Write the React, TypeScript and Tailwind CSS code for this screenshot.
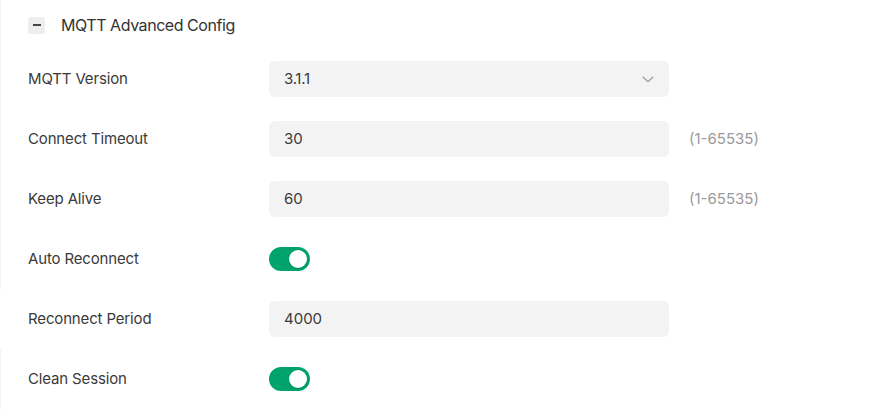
type Row =
  | { label: string; kind: 'select'; value: string }
  | { label: string; kind: 'input'; value: string; hint?: string }
  | { label: string; kind: 'switch'; on: boolean };

const rows: Row[] = [
  { label: 'MQTT Version', kind: 'select', value: '3.1.1' },
  { label: 'Connect Timeout', kind: 'input', value: '30', hint: '(1-65535)' },
  { label: 'Keep Alive', kind: 'input', value: '60', hint: '(1-65535)' },
  { label: 'Auto Reconnect', kind: 'switch', on: true },
  { label: 'Reconnect Period', kind: 'input', value: '4000' },
  { label: 'Clean Session', kind: 'switch', on: true },
];

function Toggle({ on }: { on: boolean }) {
  return (
    <div
      className={`w-[41px] h-6 rounded-full flex items-center px-[3px] ${
        on ? 'bg-[#00a36c] justify-end' : 'bg-[#d9d9d9] justify-start'
      }`}
    >
      <div className="w-[18px] h-[18px] rounded-full bg-white shadow-sm" />
    </div>
  );
}

export default function App() {
  return (
    <div className="w-[874px] h-[412px] bg-white pt-px font-['Inter',sans-serif] text-[#333] overflow-hidden">
      {/* Section header */}
      <div className="h-12 pl-[27px] flex items-center gap-4 border-l border-[#f2f2f2]">
        <div className="w-[17px] h-[17px] rounded-[3px] bg-[#eeeeee] flex items-center justify-center">
          <div className="w-2 h-[2px] bg-[#444]" />
        </div>
        <span className="text-[16px] tracking-[-0.45px] text-[#333]">MQTT Advanced Config</span>
      </div>

      {rows.map((row) => (
        <div
          key={row.label}
          className={`h-[60px] pl-[27px] flex items-center border-l ${
            row.label === 'Reconnect Period' ? 'border-white' : 'border-[#f2f2f2]'
          }`}
        >
          <div className="w-[241px] text-[15px] tracking-[-0.15px] text-[#3a3a3a]">{row.label}</div>

          {row.kind === 'select' && (
            <div className="w-[400px] h-9 rounded-md bg-[#f3f3f3] pl-[15px] pr-[14px] flex items-center justify-between">
              <span className="text-[15px] tracking-[-0.3px] text-[#3a3a3a]">{row.value}</span>
              <svg width="12" height="7" viewBox="0 0 12 7" fill="none" className="mr-px">
                <path d="M0.75 0.75 L6 5.75 L11.25 0.75" stroke="#9a9a9a" strokeWidth="1.2" />
              </svg>
            </div>
          )}

          {row.kind === 'input' && (
            <>
              <div className="w-[400px] h-9 rounded-md bg-[#f3f3f3] pl-[15px] flex items-center">
                <span className="text-[15px] text-[#3a3a3a]">{row.value}</span>
              </div>
              {row.hint && <span className="ml-5 text-[15px] text-[#9a9a9a]">{row.hint}</span>}
            </>
          )}

          {row.kind === 'switch' && <Toggle on={row.on} />}
        </div>
      ))}
    </div>
  );
}
